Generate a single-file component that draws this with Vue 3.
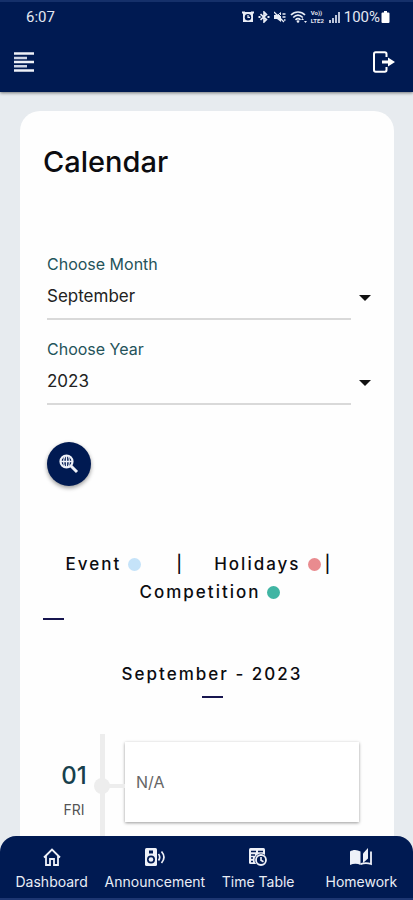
<script setup>
import { ref } from 'vue'

const months = ['January', 'February', 'March', 'April', 'May', 'June', 'July', 'August', 'September', 'October', 'November', 'December']
const years = ['2021', '2022', '2023', '2024']
const month = ref('September')
const year = ref('2023')
const days = [{ date: '01', day: 'FRI', text: 'N/A' }]
</script>

<template>
  <div class="shell">
    <header class="top">
      <div class="status">
        <span class="clock">6:07</span>
        <div class="indicators">
          <svg width="12" height="12" viewBox="0 0 12 12" aria-hidden="true">
            <path d="M1 1h10v10H1z" fill="#e9edf6" />
            <path d="M0 .5h3v2H0zM9 .5h3v2H9z" fill="#e9edf6" />
            <circle cx="6" cy="6.200" r="3.200" fill="#001a52" />
            <path d="M6 4v2.400h2" stroke="#e9edf6" stroke-width="1.200" fill="none" />
          </svg>
          <svg width="12" height="12" viewBox="0 0 12 12" aria-hidden="true">
            <path d="M2.500 3.200 8.500 8.600 6 11V1l2.500 2.400-6 5.400" fill="none" stroke="#e9edf6" stroke-width="1.600" />
            <path d="M.5 5h2v2h-2zM9.500 5h2v2h-2z" fill="#e9edf6" />
          </svg>
          <svg width="12" height="12" viewBox="0 0 12 12" aria-hidden="true">
            <path d="M0 4h3l4-3v10L3 8H0z" fill="#e9edf6" />
            <path d="m2 0 10 10" stroke="#001a52" stroke-width="1" />
            <path d="m0 1 10 10M8.500 3h3M8.500 6h3M10 9h1.500" stroke="#e9edf6" stroke-width="1.300" />
          </svg>
          <svg width="17" height="14" viewBox="0 0 17 14" aria-hidden="true">
            <path d="M1 5c4-4 10-4 14 0M3.200 7.500c3-3 6.600-3 9.600 0M5.500 9.800c1.600-1.600 3.400-1.600 5 0" fill="none" stroke="#e9edf6" stroke-width="1.700" />
            <circle cx="8" cy="11.500" r="1.300" fill="#e9edf6" />
            <path d="m11 10 1.500-2 1.500 2zM14 11l1.500 2 1.500-2z" fill="#e9edf6" />
          </svg>
          <span class="volte"><span>Vo))</span><span>LTE2</span></span>
          <svg width="11" height="12" viewBox="0 0 11 12" aria-hidden="true">
            <path d="M0 9h2v3H0zM3 7h2v5H3zM6 4h2v8H6zM9 1h2v11H9z" fill="#bcc5da" />
          </svg>
          <span class="charge">100%</span>
          <svg width="9" height="12" viewBox="0 0 9 12" aria-hidden="true">
            <path d="M3 0h3v1.500h1.500a1 1 0 0 1 1 1V11a1 1 0 0 1-1 1h-6a1 1 0 0 1-1-1V2.500a1 1 0 0 1 1-1H3z" fill="#fff" />
          </svg>
        </div>
      </div>
      <div class="bar">
        <button class="icon-button" type="button" aria-label="Menu">
          <svg width="20" height="20" viewBox="0 0 20 20" aria-hidden="true">
            <path d="M0 1.500h20M0 10h20M0 18.500h20" stroke="#eef1f8" stroke-width="2.600" />
            <path d="M0 6h13M0 14.200h13" stroke="#cdd4e4" stroke-width="2.600" />
          </svg>
        </button>
        <button class="icon-button" type="button" aria-label="Log out">
          <svg width="22" height="22" viewBox="0 0 22 22" aria-hidden="true">
            <path d="M13.500 6V3a1.700 1.700 0 0 0-1.700-1.700H2.700A1.700 1.700 0 0 0 1 3v16a1.700 1.700 0 0 0 1.700 1.700h9.100a1.700 1.700 0 0 0 1.700-1.700v-3" fill="none" stroke="#fff" stroke-width="2" />
            <path d="M9 9.500h6V6.500l7 4.500-7 4.500v-3H9z" fill="#fff" />
          </svg>
        </button>
      </div>
    </header>

    <main class="content">
      <section class="card">
        <h1>Calendar</h1>
        <form class="filters" @submit.prevent>
          <div class="field">
            <label for="month">Choose Month</label>
            <div class="control">
              <select id="month" v-model="month">
                <option v-for="m in months" :key="m">{{ m }}</option>
              </select>
              <svg width="12" height="6" viewBox="0 0 12 6" aria-hidden="true"><path d="M0 0h12L6 6z" fill="#111" /></svg>
            </div>
          </div>
          <div class="field">
            <label for="year">Choose Year</label>
            <div class="control">
              <select id="year" v-model="year">
                <option v-for="y in years" :key="y">{{ y }}</option>
              </select>
              <svg width="12" height="6" viewBox="0 0 12 6" aria-hidden="true"><path d="M0 0h12L6 6z" fill="#111" /></svg>
            </div>
          </div>
          <button class="search" type="submit" aria-label="Search">
            <svg width="20" height="20" viewBox="0 0 20 20" aria-hidden="true">
              <circle cx="7.500" cy="7.500" r="6" fill="none" stroke="#eef1f8" stroke-width="2.200" />
              <path d="M2 7.500h11M7.500 2v11" stroke="#eef1f8" stroke-width="1.300" />
              <ellipse cx="7.500" cy="7.500" rx="2.800" ry="6" fill="none" stroke="#eef1f8" stroke-width="1.200" />
              <path d="m12 12 6 6" stroke="#eef1f8" stroke-width="3" />
            </svg>
          </button>
        </form>

        <div class="legend">
          <div class="legend-row first">
            <span class="key">Event <i class="dot event"></i></span>
            <span class="divider">|</span>
            <span class="key">Holidays <i class="dot holiday"></i></span>
            <span>|</span>
          </div>
          <div class="legend-row">
            <span class="key">Competition <i class="dot competition"></i></span>
          </div>
        </div>
        <div class="rule"></div>

        <div class="period">
          <h2>{{ month }} - {{ year }}</h2>
          <div class="rule centered"></div>
        </div>

        <ol class="timeline">
          <li v-for="d in days" :key="d.date">
            <div class="when">
              <span class="date">{{ d.date }}</span>
              <span class="day">{{ d.day }}</span>
            </div>
            <div class="rail"></div>
            <div class="entry">{{ d.text }}</div>
          </li>
        </ol>
      </section>
    </main>

    <nav class="tabs" aria-label="Main">
      <a href="#dashboard">
        <svg width="18" height="18" viewBox="0 0 18 18" aria-hidden="true">
          <path d="M1 9.500 9 1.500l8 8M3 8v9h4v-6h4v6h4V8" fill="none" stroke="#eef1f8" stroke-width="1.800" />
        </svg>
        <span>Dashboard</span>
      </a>
      <a href="#announcement">
        <svg width="20" height="18" viewBox="0 0 20 18" aria-hidden="true">
          <rect x="0" y="0" width="12" height="18" rx="1.500" fill="#eef1f8" />
          <rect x="4" y="2.500" width="4" height="3" fill="#001a52" />
          <circle cx="6" cy="11.500" r="4" fill="#001a52" />
          <circle cx="6" cy="11.500" r="2.300" fill="#eef1f8" />
          <path d="M13.500 6c1.500 2 1.500 4.500 0 6.500M16.500 3.500c3 3.500 3 8 0 11.500" fill="none" stroke="#eef1f8" stroke-width="1.700" />
        </svg>
        <span>Announcement</span>
      </a>
      <a href="#timetable">
        <svg width="18" height="18" viewBox="0 0 18 18" aria-hidden="true">
          <rect x="0" y="0" width="16" height="16" rx="1.500" fill="#eef1f8" />
          <path d="M2 3.500h5M9 3.500h5M2 7h4M2 10h2M2 13.500h2" stroke="#001a52" stroke-width="1.700" />
          <circle cx="12" cy="12" r="6.500" fill="#001a52" />
          <circle cx="12" cy="12" r="5" fill="none" stroke="#eef1f8" stroke-width="1.800" />
          <path d="M12 9v3.200l2.500 1.500" fill="none" stroke="#eef1f8" stroke-width="1.600" />
        </svg>
        <span>Time Table</span>
      </a>
      <a href="#homework">
        <svg width="22" height="18" viewBox="0 0 22 18" aria-hidden="true">
          <path d="M0 3.500C3 1.500 7 1.500 10.500 3.500V17c-3-1.700-7-1.700-10.500 0z" fill="#eef1f8" />
          <path d="M13 5.500 18 0v10.500L13 15z" fill="#eef1f8" />
          <path d="M10.500 16.200c3.500-1.500 7-1.500 10.500-.2V3.500" fill="none" stroke="#eef1f8" stroke-width="1.800" />
        </svg>
        <span>Homework</span>
      </a>
    </nav>
  </div>
</template>

<style>
body {
  margin: 0;
  background: #e7ebef;
}
</style>

<style scoped>
* {
  box-sizing: border-box;
}

.shell {
  display: flex;
  flex-direction: column;
  height: 100vh;
  overflow: hidden;
  font-family: Inter, "Open Sans", sans-serif;
  color: #0c0c10;
}

.top {
  flex: none;
  background: #001a52;
  border-top: 2px solid #15306a;
  box-shadow: 0 1px 3px rgba(0, 0, 0, 0.5);
  z-index: 1;
}

.status {
  display: flex;
  justify-content: space-between;
  align-items: center;
  height: 30px;
  padding: 0 23px 0 26px;
  color: #e3e7f1;
  font-family: Roboto, sans-serif;
  font-size: 15px;
}

.indicators {
  display: flex;
  align-items: center;
  gap: 4px;
}

.volte {
  display: flex;
  flex-direction: column;
  width: 14px;
  font-size: 6px;
  font-weight: 700;
  line-height: 8px;
}

.charge {
  margin-right: -3px;
}

.bar {
  display: flex;
  justify-content: space-between;
  align-items: center;
  height: 60px;
  padding: 0 18px 0 14px;
}

.icon-button {
  display: flex;
  padding: 0;
  border: 0;
  background: none;
}

.content {
  flex: 1;
  min-height: 0;
  padding: 19px 19px 0 20px;
  overflow-y: auto;
  scrollbar-width: none;
}

.card {
  padding: 33px 23px 64px;
  border-radius: 20px;
  background: #fefefe;
}

h1 {
  margin: 0;
  font-size: 29px;
  font-weight: 500;
  line-height: 36px;
}

.filters {
  padding: 72px 0 0 4px;
}

.field {
  margin-bottom: 17px;
}

.field label {
  display: block;
  color: #24535a;
  font-size: 16px;
  font-weight: 400;
  line-height: 24px;
}

.control {
  display: flex;
  align-items: center;
  gap: 8px;
}

.control select {
  flex: 1;
  height: 44px;
  padding: 0 0 2px;
  border: 0;
  border-bottom: 2px solid #d9d9d9;
  border-radius: 0;
  appearance: none;
  background: none;
  color: #222;
  font: inherit;
  font-size: 17px;
}

.search {
  display: flex;
  align-items: center;
  justify-content: center;
  width: 44px;
  height: 44px;
  margin-top: 37px;
  padding: 0;
  border: 0;
  border-radius: 50%;
  background: #001a52;
  box-shadow: 0 2px 4px rgba(0, 0, 0, 0.4);
}

.legend {
  padding-top: 64px;
  font-size: 17px;
  font-weight: 500;
  line-height: 28px;
  letter-spacing: 2px;
}

.legend-row {
  display: flex;
  justify-content: center;
  padding-left: 6px;
}

.first {
  padding-left: 0;
  padding-right: 16px;
}

.key {
  display: flex;
  align-items: center;
  gap: 7px;
}

.divider {
  margin: 0 30px 0 35px;
}

.key + span:last-child {
  margin-left: 4px;
}

.dot {
  width: 13px;
  height: 13px;
  border-radius: 50%;
}

.event {
  background: #c5e3f9;
}

.holiday {
  background: #e98b8f;
}

.competition {
  background: #40b5a3;
}

.rule {
  width: 21px;
  height: 2px;
  margin-top: 12px;
  background: #17154f;
}

.period {
  padding: 40px 0 0 10px;
}

.centered {
  margin: 8px auto 0;
}

h2 {
  margin: 0;
  font-size: 17px;
  font-weight: 500;
  line-height: 28px;
  letter-spacing: 2px;
  text-align: center;
}

.timeline {
  margin: 36px 0 0;
  padding: 0 12px 0 0;
  list-style: none;
}

.timeline li {
  display: grid;
  grid-template-columns: 48px 34px 1fr;
}

.when {
  display: flex;
  flex-direction: column;
  align-items: center;
  padding: 24px 0 0 14px;
}

.date {
  color: #17404c;
  font-size: 24px;
  font-weight: 500;
  line-height: 36px;
}

.day {
  color: #555;
  font-size: 14px;
  line-height: 32px;
}

.rail {
  position: relative;
  border-left: 5px solid #ededed;
  margin-left: 9px;
}

.rail::before {
  content: "";
  position: absolute;
  top: 44px;
  left: -11px;
  width: 16px;
  height: 16px;
  border-radius: 50%;
  background: #ededed;
}

.rail::after {
  content: "";
  position: absolute;
  top: 50px;
  left: 0;
  right: 0;
  height: 4px;
  background: #ededed;
}

.entry {
  display: flex;
  align-items: center;
  height: 80px;
  margin: 8px 0 32px;
  padding-left: 11px;
  background: #fff;
  box-shadow: 0 1px 3px rgba(0, 0, 0, 0.4);
  color: #666;
  font-size: 16px;
}

.tabs {
  flex: none;
  display: grid;
  grid-template-columns: repeat(4, 1fr);
  height: 64px;
  margin-top: -64px;
  border-bottom: 2px solid #1d3672;
  border-radius: 16px 16px 0 0;
  background: #001a52;
  z-index: 1;
}

.tabs a {
  display: flex;
  flex-direction: column;
  align-items: center;
  gap: 6px;
  padding-top: 12px;
  color: #e9edf6;
  font-size: 14px;
  line-height: 20px;
  text-decoration: none;
}
</style>
